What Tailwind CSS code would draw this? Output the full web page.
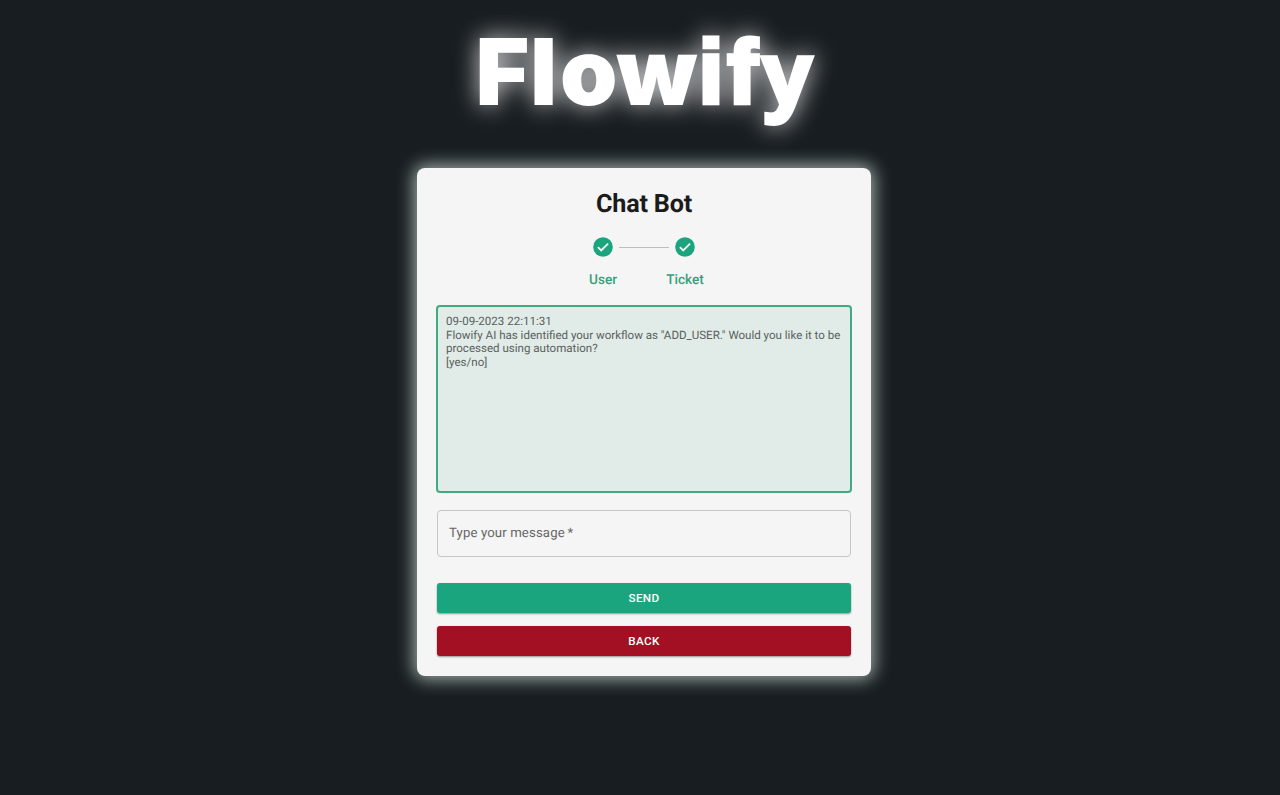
<!DOCTYPE html>
<html lang="en">
<head>
<meta charset="utf-8">
<title>Flowify</title>
<script src="https://cdn.jsdelivr.net/npm/@tailwindcss/browser@4"></script>
</head>
<body class="h-[795px] overflow-hidden bg-[#181d21] font-['Roboto',sans-serif] [text-rendering:geometricPrecision]">
<main class="flex flex-col items-center pl-2">
  <h1 class="h-[168px]">
    <svg class="block overflow-visible [filter:drop-shadow(0_0_12px_rgba(255,255,255,.8))]" width="360" height="168" viewBox="464 0 360 168" fill="#fff" font-family="Inter, sans-serif" font-weight="900" font-size="92">
      <text y="105 105 105 105 103 103 104.5" x="475.5 530 560 616.5 698.5 727.5 762">Flow<tspan font-family="Liberation Sans, sans-serif" font-weight="700" font-size="90" stroke="#fff" stroke-width="4.5">ify</tspan></text>
    </svg>
  </h1>
  <section class="flex h-[508px] w-[454px] flex-col rounded-lg bg-[#f5f5f5] px-5 shadow-[0_0_17px_3px_rgba(235,255,245,.65)]">
    <h2 class="mt-[21px] text-center text-[25.2px] leading-8 font-bold tracking-[-.2px] text-[#1b1b1b]">Chat Bot</h2>
    <div class="mt-4 flex justify-center text-[13.6px] font-medium text-[#3a9f7c]">
      <div class="flex w-[82px] flex-col items-center">
        <svg width="20" height="20" viewBox="0 0 20 20"><circle cx="10" cy="10" r="9.8" fill="#1ba57e"/><path d="M4.9 10.2l3.3 3.3L15.1 6.6" fill="none" stroke="#f5f5f5" stroke-width="1.8"/></svg>
        <span class="mt-[13px] leading-5">User</span>
      </div>
      <div class="relative flex w-[82px] flex-col items-center">
        <span class="absolute top-[10px] -left-[25px] h-px w-[50px] bg-[#bdbdbd]"></span>
        <svg width="20" height="20" viewBox="0 0 20 20"><circle cx="10" cy="10" r="9.8" fill="#1ba57e"/><path d="M4.9 10.2l3.3 3.3L15.1 6.6" fill="none" stroke="#f5f5f5" stroke-width="1.8"/></svg>
        <span class="mt-[13px] leading-5">Ticket</span>
      </div>
    </div>
    <div class="-mx-px mt-[15px] h-[188px] rounded border-2 border-[#40aa83] bg-[#e1ebe7] px-2 pt-2 text-[11.55px] leading-[13.7px] whitespace-nowrap text-[#59605d]">
      <p>09-09-2023 22:11:31</p>
      <p>Flowify AI has identified your workflow as "ADD_USER." Would you like it to be</p>
      <p>processed using automation?</p>
      <p>[yes/no]</p>
    </div>
    <div class="mt-[17px] flex h-[47px] items-center rounded border border-[#c6c6c6] pt-px pl-[11px] text-[13.2px] tracking-[.12px] text-[#666]">Type your message&#8201;*</div>
    <button class="mt-[26px] h-[30px] shrink-0 rounded-[3px] bg-[#1ba57e] pt-px text-[11.7px] font-medium tracking-[.3px] text-white shadow-[0_1px_2px_rgba(0,0,0,.4)]">SEND</button>
    <button class="mt-[13px] h-[30px] shrink-0 rounded-[3px] bg-[#a31024] pt-px text-[11.7px] font-medium tracking-[.3px] text-white shadow-[0_1px_2px_rgba(0,0,0,.4)]">BACK</button>
  </section>
</main>
</body>
</html>
